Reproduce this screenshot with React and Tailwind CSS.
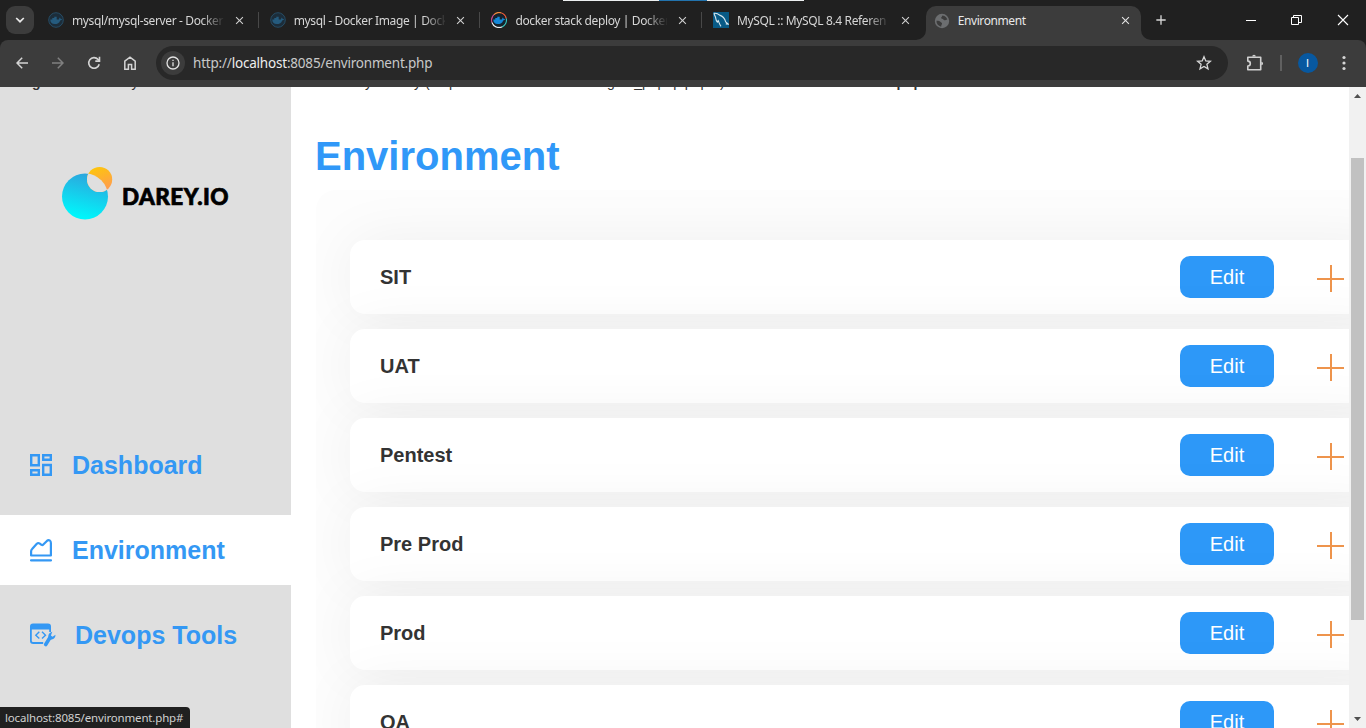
import React from "react";
import { MdClose, MdAdd } from "react-icons/md";

function DockerIcon({ colorful }) {
  return (
    <svg width="16" height="16" viewBox="0 0 16 16" className="shrink-0">
      {colorful ? (
        <g fill="none" strokeWidth="1.3">
          <path d="M1 10.5A7.4 7.4 0 0 1 3 2.7" stroke="#c04a8a" />
          <path d="M3 2.7A7.4 7.4 0 0 1 10.500 1" stroke="#f08a3c" />
          <path d="M10.500 1A7.400 7.400 0 0 1 15.200 6.500" stroke="#ee5a3a" />
          <path d="M15.200 6.500A7.400 7.400 0 0 1 11 14.800" stroke="#35c5c0" />
          <path d="M11 14.800A7.400 7.400 0 0 1 1 10.500" stroke="#e8eef2" />
          <circle cx="8" cy="8" r="6.600" fill="#15222c" stroke="none" />
        </g>
      ) : (
        <circle cx="8" cy="8" r="7.300" fill="#1c2d3a" stroke="#27506b" strokeWidth="0.900" />
      )}
      <path
        d="M2.300 7.600h2V6h2V4.800h2.400v2.800h1.700c.6 0 .8-.3.700-.9.200-.7.500-1 .8-1.200.5.400.7.900.7 1.400.6 0 1.100.1 1.500.4-.4.800-1 1.100-1.900 1.100-.9 2.500-2.800 3.700-5.500 3.700-3 0-4.400-1.700-4.400-4.500z"
        fill={colorful ? "#1488d8" : "#255b7e"}
      />
    </svg>
  );
}

function MySqlIcon() {
  return (
    <svg width="16" height="16" viewBox="0 0 16 16" className="shrink-0">
      <rect width="16" height="16" fill="#085a86" />
      <path
        d="M1 1.300c2.200-.3 4.200.5 5.600 1.800 3.400 1 5.300 3.900 6.100 6.800l2.600 2.300-2.500-.3M1 1.300c.2 1.800 1.200 2.700 1.600 4.200.3 1.500.3 3.200 1.700 4.600l.9-1.500c.8 1.400 1.100 3.700 2.800 5.700"
        fill="none"
        stroke="#d6e6ee"
        strokeWidth="1.100"
      />
    </svg>
  );
}

function GlobeIcon() {
  return (
    <svg width="16" height="16" viewBox="0 0 16 16" className="shrink-0">
      <circle cx="8" cy="8" r="7.200" fill="#6c6e70" />
      <path d="M2.500 7.800c1.500-.2 3 .2 3.800 1 .8.900 2 .8 1.700 2-.2 1-.8 1.200-.8 2.900C4 13 2.300 10.500 2.500 7.800zM8.500 2.600c-.8.600-.2 1.300-1 1.700-.8.300-.4 1.500.600 1.500 1.300 0 1.300 1.500 2.500 1.500s1.500-.7 2.700-.5c-.4-2-2-4.100-4.800-4.200z" fill="#3c3c3c" />
    </svg>
  );
}

const tabs = [
  { title: "mysql/mysql-server - Docker", icon: <DockerIcon /> },
  { title: "mysql - Docker Image | Dock", icon: <DockerIcon /> },
  { title: "docker stack deploy | Docker", icon: <DockerIcon colorful /> },
  { title: "MySQL :: MySQL 8.4 Referen", icon: <MySqlIcon /> },
];

function TabStrip() {
  return (
    <div className="relative flex h-10 bg-[#202020]">
      <div className="absolute left-[563px] top-0 flex h-px w-[241px] bg-[#eceff0]">
        <div className="ml-24 w-12 bg-[#2273ad]" />
      </div>
      <div className="ml-1.5 mt-1.5 flex size-7 shrink-0 items-center justify-center rounded-[9px] bg-[#3c3c3c]">
        <svg width="10" height="8" viewBox="0 0 10 8" fill="none" stroke="#e8e8e8" strokeWidth="1.700">
          <path d="M1.200 2l3.800 3.700L8.800 2" />
        </svg>
      </div>
      <div className="ml-[3px] flex">
        {tabs.map((tab, i) => (
          <div key={tab.title} className="flex w-[221.700px] shrink-0 items-center pl-[11px]">
            {tab.icon}
            <div className="ml-2 w-[153px] overflow-hidden whitespace-nowrap pt-px text-[12px] tracking-[-0.360px] text-[#d6d6d6] [mask-image:linear-gradient(to_right,black_130px,transparent_153px)]">
              {tab.title}
            </div>
            <MdClose className="ml-[9px] size-[13px] shrink-0 text-[#d0d0d0]" />
            {i < 3 && <div className="ml-[12px] h-4 w-px bg-[#484848]" />}
          </div>
        ))}
      </div>
      <div className="relative ml-[2px] mt-1.5 flex h-[34px] w-[215px] items-center rounded-t-[10px] bg-[#3c3c3c] pb-[5px] pl-2">
        <svg width="10" height="10" className="absolute -left-[10px] bottom-0"><path d="M10 0v10H0A10 10 0 0 0 10 0z" fill="#3c3c3c" /></svg>
        <svg width="10" height="10" className="absolute -right-[10px] bottom-0"><path d="M0 0v10h10A10 10 0 0 1 0 0z" fill="#3c3c3c" /></svg>
        <GlobeIcon />
        <span className="ml-2 pt-px text-[12px] tracking-[-0.420px] text-[#e8e8e8]">Environment</span>
        <MdClose className="ml-auto mr-[9px] size-[13px] text-[#e4e4e4]" />
      </div>
      <MdAdd className="ml-[12px] mt-[12px] size-4 text-[#d6d6d6]" />
      <div className="ml-auto mr-[17px] flex items-center gap-[35px]">
        <svg width="10" height="12"><path d="M0 6.500h10" stroke="#fff" /></svg>
        <svg width="11" height="12" fill="none" stroke="#fff"><path d="M.5 3.500h7v7h-7zM2.500 3V1.500h8v7H8" /></svg>
        <svg width="12" height="12" stroke="#fff" strokeWidth="1.100"><path d="M1 1l10 10M11 1L1 11" /></svg>
      </div>
    </div>
  );
}

function Toolbar() {
  return (
    <div className="bg-[#202020]">
      <div className="flex h-[47px] items-center rounded-t-[8px] bg-[#3c3c3c] pb-px pl-4">
        <svg width="12" height="12" fill="none" stroke="#d4d4d4" strokeWidth="1.500"><path d="M12 6H1M6.200.8L1 6l5.200 5.200" /></svg>
        <svg width="12" height="12" fill="none" stroke="#808080" strokeWidth="1.500" className="ml-6"><path d="M0 6h11M5.800.8L11 6l-5.200 5.200" /></svg>
        <svg width="14" height="14" fill="none" stroke="#d4d4d4" strokeWidth="1.600" className="ml-[23px]">
          <path d="M12.200 8.200A5.300 5.300 0 1 1 11 3.400l1.500 1.500" /><path d="M12.500.8v4.300H8.300" />
        </svg>
        <svg width="12" height="14" fill="none" stroke="#d4d4d4" strokeWidth="1.500" className="ml-[23px]">
          <path d="M.8 5.200L6 1.200l5.200 4v8H7.600V8.500H4.400v4.700H.8z" />
        </svg>
        <div className="ml-5 flex h-[34px] w-[1072px] items-center rounded-full bg-[#282828] pl-[5px] pr-4">
          <div className="flex size-6 items-center justify-center rounded-full bg-[#3c3c3c]">
            <svg width="14" height="14" fill="none" stroke="#e3e3e3" strokeWidth="1.300"><circle cx="7" cy="7" r="6" /><path d="M7 6.200v4M7 3.700v1.400" /></svg>
          </div>
          <div className="ml-2 whitespace-nowrap text-[13.500px] tracking-[-0.200px] text-[#c9c9c9]">
            http://<span className="text-[#eeeeee]">localhost</span>:8085/environment.php
          </div>
          <svg width="16" height="16" viewBox="0 0 16 16" fill="none" stroke="#d8d8d8" strokeWidth="1.300" className="ml-auto">
            <path d="M8 1.700l1.800 4.200 4.600.4-3.500 3 1.100 4.500L8 11.400l-4 2.400 1.100-4.500-3.500-3 4.600-.4z" />
          </svg>
        </div>
        <svg width="18" height="18" viewBox="0 0 18 18" fill="none" stroke="#d0d0d0" strokeWidth="1.600" className="ml-[18px]">
          <path d="M1.800 3.200h12.900v12.600H1.800v-3.700a2.200 2.200 0 0 0 0-5z" strokeLinejoin="round" />
          <path d="M6.200 2.500a1.800 1.800 0 0 1 3.600 0zM15.300 7.700a1.800 1.800 0 0 1 0 3.600z" fill="#d0d0d0" stroke="none" />
        </svg>
        <div className="ml-4 h-4 w-[1.500px] bg-[#606060]" />
        <div className="ml-4 flex size-5 items-center justify-center rounded-full bg-[#0758a0] font-['Liberation_Sans',sans-serif] text-[11px] text-white">I</div>
        <svg width="4" height="16" fill="#d6d6d6" className="ml-6"><circle cx="2" cy="2.500" r="1.600" /><circle cx="2" cy="8" r="1.600" /><circle cx="2" cy="13.500" r="1.600" /></svg>
      </div>
    </div>
  );
}

function Logo() {
  return (
    <div className="ml-[61px] mt-[79px] flex h-[54px] items-center">
      <svg width="52" height="54" viewBox="0 0 52 54">
        <defs>
          <linearGradient id="sea" x1="0.650" y1="0" x2="0.400" y2="1"><stop offset="0" stopColor="#2ea3dc" /><stop offset="0.950" stopColor="#00f6fb" /></linearGradient>
          <linearGradient id="sun" x1="0.300" y1="0" x2="0.700" y2="1"><stop offset="0" stopColor="#fdc60a" /><stop offset="1" stopColor="#ff9a55" /></linearGradient>
          <clipPath id="overlap"><circle cx="38.600" cy="13.500" r="12.600" /></clipPath>
        </defs>
        <circle cx="24" cy="30.500" r="23" fill="url(#sea)" />
        <circle cx="38.600" cy="13.500" r="12.600" fill="url(#sun)" />
        <circle cx="24" cy="30.500" r="23" fill="#dfdfdf" clipPath="url(#overlap)" />
      </svg>
      <span className="ml-[9px] mt-[7px] font-['Lato',sans-serif] text-[22.500px] font-black tracking-[0.450px] text-black [-webkit-text-stroke:0.700px_black]">DAREY.IO</span>
    </div>
  );
}

function Sidebar() {
  return (
    <aside className="w-[291px] shrink-0 bg-[#dfdfdf] text-[25px] font-bold text-[#3498f4]">
      <Logo />
      <nav className="mt-[210px] flex flex-col gap-[15px]">
        <div className="flex h-[70px] items-center pl-[30px]">
          <svg width="22" height="22" fill="none" stroke="#3498f4" strokeWidth="2.400">
            <path d="M1.200 1.200h7.600v10H1.200zM13.200 1.200h7.600v4.600h-7.600zM1.200 16.200h7.600v4.600H1.200zM13.200 11h7.600v9.800h-7.600z" />
          </svg>
          <span className="ml-5 pt-0.5">Dashboard</span>
        </div>
        <div className="flex h-[70px] items-center bg-white pl-[30px]">
          <svg width="22" height="23" fill="none" stroke="#3498f4" strokeWidth="2.200">
            <path d="M1.100 16.500v-4q0-1.500 1-2.500L6.800 4.700q1.300-1.200 2.700-.3l2 1.500q1 .6 1.800-.3l3.600-3.700Q18.300.7 19.700 1.400q1.200.7 1.200 2.600v12.500z" strokeLinejoin="round" />
            <path d="M1 21.300h20" strokeLinecap="round" />
          </svg>
          <span className="ml-5 pt-0.5">Environment</span>
        </div>
        <div className="flex h-[70px] items-center pl-[30px]">
          <svg width="26" height="24" fill="none" stroke="#3498f4" strokeWidth="1.800">
            <path d="M0 6.500V3.500q0-3 3-3h15q3 0 3 3v3z" fill="#3498f4" stroke="none" />
            <path d="M.9 5v12.700q0 2.300 2.300 2.300h10M20.100 5v4" />
            <path d="M9.300 8.800L5.800 12.200l3.500 3.400M12 8.800l3.500 3.400-3.500 3.400" strokeWidth="1.400" />
            <path d="M15.700 21.500l4-6.500" strokeWidth="3.600" strokeLinecap="round" />
            <path d="M22.300 8.800c-2.500.5-4.300 2.400-4 5 .3 2 1.700 3 3.300 2.800 2.400-.3 4-2.200 3.900-4.800l-3 2-1.600-1.300z" fill="#3498f4" stroke="none" />
          </svg>
          <span className="ml-[19px] pt-0.5">Devops Tools</span>
        </div>
      </nav>
    </aside>
  );
}

const environments = ["SIT", "UAT", "Pentest", "Pre Prod", "Prod", "QA"];

function Main() {
  return (
    <main className="flex min-w-0 grow flex-col overflow-hidden bg-white pl-[25px]">
      <h1 className="-ml-px mt-[46px] text-[40px] font-bold leading-[46px] text-[#3098f8]">Environment</h1>
      <section className="mt-[11px] grow overflow-hidden rounded-tl-[20px] bg-[#fdfdfd] pl-[34px] pt-[50px]">
        <div className="flex w-[1040px] flex-col gap-[15px]">
          {environments.map((name) => (
            <div key={name} className="flex h-[74px] shrink-0 items-center rounded-[15px] bg-white pl-[30px] shadow-[0_0_60px_rgba(0,0,0,0.060)]">
              <span className="text-[20px] font-bold text-[#333333]">{name}</span>
              <button className="ml-auto h-[42px] w-[94px] rounded-[10px] bg-[#2d98f8] text-[20px] text-white">Edit</button>
              <svg width="28" height="28" stroke="#ee944c" strokeWidth="2" className="ml-[43px] mr-[45px] mt-1"><path d="M0 14h27M14 0v27" /></svg>
            </div>
          ))}
        </div>
      </section>
    </main>
  );
}

function Scrollbar() {
  return (
    <div className="flex w-[17px] shrink-0 flex-col items-center bg-[#f1f1f1]">
      <svg width="7" height="4" fill="#505050" className="mt-[7px]"><path d="M0 4l3.500-4L7 4z" /></svg>
      <div className="mt-[60px] h-[462px] w-[13px] bg-[#c1c1c1]" />
      <svg width="7" height="4" fill="#505050" className="mb-[7px] mt-auto"><path d="M0 0l3.500 4L7 0z" /></svg>
    </div>
  );
}

export default function App() {
  return (
    <div className="flex h-[728px] w-[1366px] flex-col overflow-hidden font-['Noto_Sans',sans-serif]">
      <TabStrip />
      <Toolbar />
      <div className="relative flex min-h-0 grow overflow-hidden font-['Liberation_Sans',Arial,sans-serif]">
        <Sidebar />
        <Main />
        <Scrollbar />
        <p className="absolute -left-[15px] -top-[15px] whitespace-nowrap text-[14px] leading-5 text-[#333333]">
          <b>Warning</b>: Cannot modify header information - headers already sent by (output started at /var/www/logout_popup.php:1) in <b>/var/www/environment.php</b> on line <b>3</b>
        </p>
        <div className="absolute bottom-0 left-0 h-[21px] w-[190px] whitespace-nowrap rounded-tr bg-[#202020] pl-[5px] font-['Noto_Sans',sans-serif] text-[11.500px] leading-[21px] tracking-[-0.170px] text-[#d0d0d0]">
          localhost:8085/environment.php#
        </div>
      </div>
    </div>
  );
}
